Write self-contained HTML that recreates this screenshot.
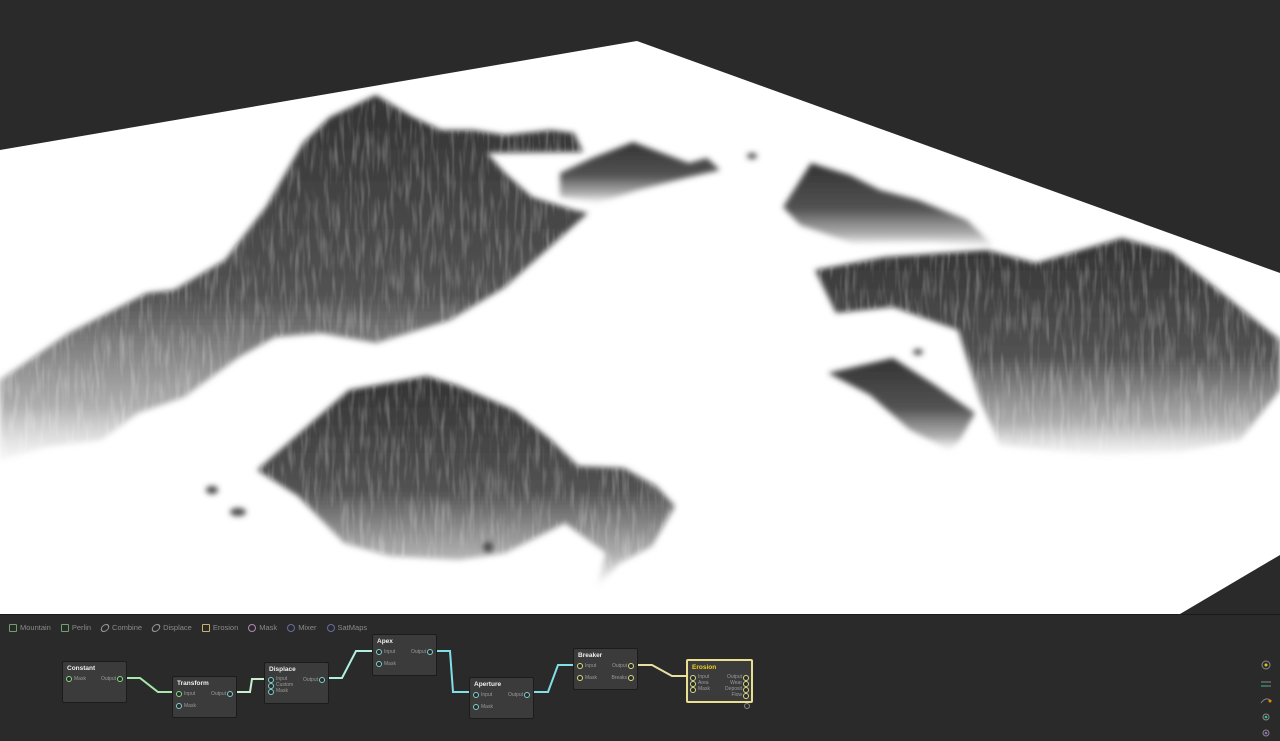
<!DOCTYPE html><html><head><style>
body{margin:0;width:1280px;height:741px;background:#2a2a2a;overflow:hidden;font-family:"Liberation Sans",sans-serif;position:relative}
.tb{position:absolute;top:623px;left:9px;font-size:7.5px;color:#8a8a8a;display:flex;gap:0}
.tb span{display:inline-flex;align-items:center;margin-right:10px}
.ic{width:6px;height:6px;border:1px solid #6fa06f;margin-right:3px;display:inline-block;border-radius:1px}
.node{position:absolute;background:#3b3b3b;border:1px solid #1c1c1c;border-radius:2px;width:63px;height:40px;font-size:5px;color:#9a9a9a}
.node b{position:absolute;left:4px;top:3px;font-size:6.5px;color:#eee}
.p{position:absolute;width:4px;height:4px;border-radius:50%;border:1px solid #7fd0d0;background:#2a2a2a}
</style></head><body>
<svg width="1280" height="615" style="position:absolute;left:0;top:0">
<defs>
<filter id="b" x="-20%" y="-20%" width="140%" height="140%"><feGaussianBlur stdDeviation="3"/></filter>
<linearGradient id="g" x1="0" y1="0" x2="0" y2="1"><stop offset="0" stop-color="#333" stop-opacity="1"/><stop offset="0.55" stop-color="#4a4a4a" stop-opacity="0.95"/><stop offset="0.85" stop-color="#777" stop-opacity="0.6"/><stop offset="1" stop-color="#aaa" stop-opacity="0.1"/></linearGradient>
<filter id="tex" x="0" y="0" width="100%" height="100%"><feTurbulence type="fractalNoise" baseFrequency="0.2 0.03" numOctaves="2" seed="3"/><feColorMatrix values="0 0 0 0 1  0 0 0 0 1  0 0 0 0 1  0 0 0 -1.6 0.9"/></filter>
<clipPath id="cp">
<polygon points="0,380 69,333 147,293 174,290 225,260 266,207 303,143 330,117 376,95 413,117 441,130 473,130 505,135 551,130 574,133 583,152 487,153 505,173 532,197 574,210 588,213 505,287 450,320 376,343 321,333 275,337 239,357 184,397 138,413 101,440 46,447 0,460"/>
<polygon points="257,470 349,390 427,376 459,386 514,410 551,440 578,466 624,468 656,486 675,506 652,546 620,563 597,586 606,553 565,523 505,553 459,560 390,556 344,543 298,496"/>
<polygon points="815,270 885,257 987,250 1036,263 1122,238 1171,252 1280,340 1280,390 1240,440 1180,452 1100,455 1000,445 980,400 958,330 893,307 836,313"/>
</clipPath>
</defs>
<rect width="1280" height="615" fill="#2a2a2a"/>
<polygon points="0,150 637,41 1280,273 1280,555 1180,614 0,614" fill="#fff"/>
<g fill="url(#g)" filter="url(#b)">
<polygon points="0,380 69,333 147,293 174,290 225,260 266,207 303,143 330,117 376,95 413,117 441,130 473,130 505,135 551,130 574,133 583,152 487,153 505,173 532,197 574,210 588,213 505,287 450,320 376,343 321,333 275,337 239,357 184,397 138,413 101,440 46,447 0,460"/>
<polygon points="257,470 349,390 427,376 459,386 514,410 551,440 578,466 624,468 656,486 675,506 652,546 620,563 597,586 606,553 565,523 505,553 459,560 390,556 344,543 298,496"/>
<polygon points="560,173 592,158 633,142 689,163 707,158 720,170 689,177 638,190 597,203 560,197"/>
<polygon points="815,270 885,257 987,250 1036,263 1122,238 1171,252 1280,340 1280,390 1240,440 1180,452 1100,455 1000,445 980,400 958,330 893,307 836,313"/>
<polygon points="828,373 893,358 935,385 975,413 960,440 950,450 910,430 870,395"/>
<polygon points="783,207 811,163 850,175 880,190 918,200 967,220 995,247 930,242 852,243 800,225"/>
</g>
<rect width="1280" height="615" filter="url(#tex)" clip-path="url(#cp)" opacity="0.35"/>
<g fill="#444" filter="url(#b)"><ellipse cx="212" cy="490" rx="6" ry="4"/><ellipse cx="238" cy="512" rx="8" ry="4"/><ellipse cx="488" cy="547" rx="5" ry="5"/><ellipse cx="752" cy="156" rx="5" ry="3"/><ellipse cx="918" cy="352" rx="5" ry="3"/></g>
</svg>
<div style="position:absolute;top:614px;left:0;width:1280px;height:1px;background:#1a1a1a"></div>
<div class="tb">
<span><i class="ic"></i>Mountain</span><span><i class="ic"></i>Perlin</span><span><i class="ic" style="border-color:#999;border-radius:50%;transform:skew(-20deg)"></i>Combine</span><span><i class="ic" style="border-color:#999;border-radius:50%;transform:skew(-20deg)"></i>Displace</span><span><i class="ic" style="border-color:#c8b070"></i>Erosion</span><span><i class="ic" style="border-color:#b08ab0;border-radius:50%"></i>Mask</span><span><i class="ic" style="border-color:#6a6aa0;border-radius:50%"></i>Mixer</span><span><i class="ic" style="border-color:#6a6aa0;border-radius:50%"></i>SatMaps</span>
</div>
<svg width="1280" height="741" style="position:absolute;left:0;top:0">
<g fill="none" stroke-width="2">
<path d="M126,678 L140,678 L158,692 L172,692" stroke="#a8e8a8"/>
<path d="M236,692 L250,692 L252,679 L264,679" stroke="#c8f0d0"/>
<path d="M329,678 L342,678 L356,651 L372,651" stroke="#b0f0e0"/>
<path d="M436,651 L450,651 L453,692 L469,692" stroke="#80e0e8"/>
<path d="M534,692 L548,692 L558,665 L573,665" stroke="#80e0e8"/>
<path d="M637,665 L652,665 L672,676 L687,676" stroke="#e8e0a0"/>
</g>
</svg>
<div class="node" style="left:62px;top:661px"><b>Constant</b><span class="p" style="left:3px;top:14px;border-color:#8d8"></span><span style="position:absolute;left:11px;top:14px">Mask</span><span style="position:absolute;right:10px;top:14px">Output</span><span class="p" style="right:3px;top:14px;border-color:#8d8"></span></div>
<div class="node" style="left:172px;top:676px"><b>Transform</b><span class="p" style="left:3px;top:14px;border-color:#8d8"></span><span style="position:absolute;left:11px;top:14px">Input</span><span style="position:absolute;right:10px;top:14px">Output</span><span class="p" style="right:3px;top:14px"></span><span class="p" style="left:3px;top:26px"></span><span style="position:absolute;left:11px;top:26px">Mask</span></div>
<div class="node" style="left:264px;top:662px"><b>Displace</b><span class="p" style="left:3px;top:14px"></span><span class="p" style="left:3px;top:20px"></span><span class="p" style="left:3px;top:26px"></span><span style="position:absolute;left:11px;top:13px;line-height:6px">Input<br>Custom<br>Mask</span><span style="position:absolute;right:10px;top:14px">Output</span><span class="p" style="right:3px;top:14px"></span></div>
<div class="node" style="left:372px;top:634px"><b>Apex</b><span class="p" style="left:3px;top:14px"></span><span style="position:absolute;left:11px;top:14px">Input</span><span style="position:absolute;right:10px;top:14px">Output</span><span class="p" style="right:3px;top:14px"></span><span class="p" style="left:3px;top:26px"></span><span style="position:absolute;left:11px;top:26px">Mask</span></div>
<div class="node" style="left:469px;top:677px"><b>Aperture</b><span class="p" style="left:3px;top:14px"></span><span style="position:absolute;left:11px;top:14px">Input</span><span style="position:absolute;right:10px;top:14px">Output</span><span class="p" style="right:3px;top:14px"></span><span class="p" style="left:3px;top:26px"></span><span style="position:absolute;left:11px;top:26px">Mask</span></div>
<div class="node" style="left:573px;top:648px"><b>Breaker</b><span class="p" style="left:3px;top:14px;border-color:#dd8"></span><span style="position:absolute;left:11px;top:14px">Input</span><span style="position:absolute;right:10px;top:14px">Output</span><span class="p" style="right:3px;top:14px;border-color:#dd8"></span><span class="p" style="left:3px;top:26px;border-color:#dd8"></span><span style="position:absolute;left:11px;top:26px">Mask</span><span style="position:absolute;right:10px;top:26px">Breaks</span><span class="p" style="right:3px;top:26px;border-color:#dd8"></span></div>
<div class="node" style="left:686px;top:659px;border:2px solid #e8e090;width:63px"><b style="color:#f0d020">Erosion</b><span class="p" style="left:2px;top:14px;border-color:#dd8"></span><span class="p" style="left:2px;top:20px;border-color:#dd8"></span><span class="p" style="left:2px;top:26px;border-color:#dd8"></span><span style="position:absolute;left:10px;top:13px;line-height:6px">Input<br>Area<br>Mask</span><span style="position:absolute;right:9px;top:13px;line-height:6px;text-align:right">Output<br>Wear<br>Deposit<br>Flow</span><span class="p" style="right:2px;top:14px;border-color:#dd8"></span><span class="p" style="right:2px;top:20px;border-color:#dd8"></span><span class="p" style="right:2px;top:26px;border-color:#dd8"></span><span class="p" style="right:2px;top:32px;border-color:#dd8"></span></div>
<div style="position:absolute;left:744px;top:703px;width:4px;height:4px;border:1px solid #888;border-radius:50%"></div>
<svg width="20" height="80" style="position:absolute;left:1258px;top:658px" fill="none">
<circle cx="8" cy="7" r="4" stroke="#888"/><circle cx="8" cy="7" r="1.5" fill="#e8c020"/>
<path d="M3,24 H13 M3,28 H13" stroke="#888"/><path d="M3,28 H9" stroke="#2c8"/>
<path d="M3,45 Q8,38 13,43" stroke="#888"/><circle cx="12" cy="43" r="1.5" fill="#e80"/>
<circle cx="8" cy="59" r="3" stroke="#888"/><circle cx="8" cy="59" r="1.3" fill="#2c8"/>
<circle cx="8" cy="75" r="3" stroke="#888"/><circle cx="8" cy="75" r="1.3" fill="#96c"/>
</svg>
</body></html>
